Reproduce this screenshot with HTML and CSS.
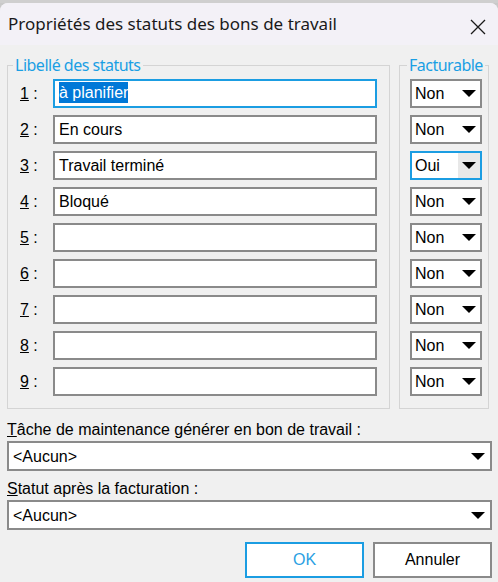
FILE: index.html
```html
<!DOCTYPE html>
<html lang="fr">
<head>
    <meta charset="UTF-8">
    <meta name="viewport" content="width=device-width, initial-scale=1.0">
    <title>Propriétés des statuts des bons de travail</title>
    <link rel="stylesheet" href="styles.css">
</head>
<body>
    <div class="behind"></div>

    <div class="dialog">
        <div class="titlebar">
            <span class="title">Propriétés des statuts des bons de travail</span>
            <svg class="close" width="16" height="16" viewBox="0 0 16 16">
                <path d="M1 1 L15 15 M15 1 L1 15" stroke="#1a1a1a" stroke-width="1.3" fill="none"/>
            </svg>
        </div>

        <div class="content">
            <div class="groups">
                <fieldset class="group group-labels">
                    <legend>Libellé des statuts</legend>
                    <div class="row"><span class="num"><u>1</u> :</span><div class="field focused"><span class="selected">à planifier</span></div></div>
                    <div class="row"><span class="num"><u>2</u> :</span><div class="field">En cours</div></div>
                    <div class="row"><span class="num"><u>3</u> :</span><div class="field">Travail terminé</div></div>
                    <div class="row"><span class="num"><u>4</u> :</span><div class="field">Bloqué</div></div>
                    <div class="row"><span class="num"><u>5</u> :</span><div class="field"></div></div>
                    <div class="row"><span class="num"><u>6</u> :</span><div class="field"></div></div>
                    <div class="row"><span class="num"><u>7</u> :</span><div class="field"></div></div>
                    <div class="row"><span class="num"><u>8</u> :</span><div class="field"></div></div>
                    <div class="row"><span class="num"><u>9</u> :</span><div class="field"></div></div>
                </fieldset>

                <fieldset class="group group-bill">
                    <legend>Facturable</legend>
                    <div class="combo small"><span class="value">Non</span><span class="drop"><span class="arrow"></span></span></div>
                    <div class="combo small"><span class="value">Non</span><span class="drop"><span class="arrow"></span></span></div>
                    <div class="combo small focused"><span class="value">Oui</span><span class="drop hot"><span class="arrow"></span></span></div>
                    <div class="combo small"><span class="value">Non</span><span class="drop"><span class="arrow"></span></span></div>
                    <div class="combo small"><span class="value">Non</span><span class="drop"><span class="arrow"></span></span></div>
                    <div class="combo small"><span class="value">Non</span><span class="drop"><span class="arrow"></span></span></div>
                    <div class="combo small"><span class="value">Non</span><span class="drop"><span class="arrow"></span></span></div>
                    <div class="combo small"><span class="value">Non</span><span class="drop"><span class="arrow"></span></span></div>
                    <div class="combo small"><span class="value">Non</span><span class="drop"><span class="arrow"></span></span></div>
                </fieldset>
            </div>

            <div class="caption first"><u>T</u>âche de maintenance générer en bon de travail :</div>
            <div class="combo wide"><span class="value">&lt;Aucun&gt;</span><span class="drop"><span class="arrow"></span></span></div>

            <div class="caption"><u>S</u>tatut après la facturation :</div>
            <div class="combo wide"><span class="value">&lt;Aucun&gt;</span><span class="drop"><span class="arrow"></span></span></div>

            <div class="buttons">
                <button class="btn ok">OK</button>
                <button class="btn">Annuler</button>
            </div>
        </div>
    </div>
</body>
</html>
```

FILE: styles.css
```css
html, body {
    margin: 0;
    padding: 0;
}

body {
    width: 498px;
    height: 582px;
    overflow: hidden;
    background-color: #c9c9c9;
    font-family: "Liberation Sans", Arial, sans-serif;
    font-size: 16px;
    color: #000;
}

.behind {
    height: 3px;
    background-color: #cfcfcf;
}

.dialog {
    background-color: #f0f0f0;
    border-top-left-radius: 8px;
    border-top-right-radius: 8px;
    overflow: hidden;
    height: 579px;
}

.titlebar {
    height: 42px;
    background-color: #f3f1f7;
    display: flex;
    align-items: center;
    justify-content: space-between;
    padding: 0 12px 0 8px;
}

.titlebar .title {
    font-family: "Noto Sans", sans-serif;
    font-size: 17px;
    color: #1a1a1a;
    margin-top: -1px;
}

.titlebar .close {
    margin-top: 6px;
}

.content {
    padding: 0 6px 0 7px;
}

.groups {
    display: flex;
    gap: 9px;
    margin-top: 10px;
}

.group {
    margin: 0;
    border: 1px solid #d4d4d4;
    padding: 4px 12px 12px 12px;
    display: flex;
    flex-direction: column;
    gap: 7px;
    min-width: 0;
}

.group legend {
    font-family: "Noto Sans", sans-serif;
    font-size: 16px;
    letter-spacing: -0.5px;
    line-height: 20px;
    color: #1a9fe4;
    padding: 0 2px;
    margin-left: -7px;
}

.group-labels {
    width: 357px;
}

.group-bill {
    width: 70px;
    padding-left: 10px;
    padding-right: 8px;
}

.group-bill legend {
    margin-left: -3px;
}

.row {
    display: flex;
    align-items: center;
    height: 29px;
}

.num {
    width: 33px;
    flex-shrink: 0;
}

.field {
    width: 324px;
    height: 29px;
    box-sizing: border-box;
    border: 2px solid #8a8a8a;
    background-color: #fff;
    padding: 0 4px;
    line-height: 25px;
    white-space: nowrap;
}

.field.focused {
    border-color: #1b9de2;
}

.selected {
    background-color: #0078d7;
    color: #fff;
    display: inline-block;
    line-height: 21px;
    vertical-align: top;
    margin-top: 1px;
}

.combo {
    display: flex;
    align-items: center;
    box-sizing: border-box;
    border: 2px solid #8a8a8a;
    background-color: #fff;
    height: 29px;
}

.combo.focused {
    border-color: #1b9de2;
}

.combo .value {
    flex: 1;
    padding-left: 3px;
    line-height: 25px;
}

.combo .drop {
    width: 22px;
    height: 25px;
    display: flex;
    align-items: center;
    justify-content: center;
}

.combo .drop.hot {
    background-color: #e8e8e8;
}

.arrow {
    width: 0;
    height: 0;
    border-left: 7px solid transparent;
    border-right: 7px solid transparent;
    border-top: 7px solid #000;
}

.combo.small {
    width: 72px;
}

.combo.wide {
    width: 485px;
    height: 30px;
}

.combo.wide .value {
    padding-left: 4px;
}

.combo.wide .drop {
    width: 20px;
    margin-right: 2px;
}

.caption {
    line-height: 23px;
    margin-top: 6px;
    white-space: nowrap;
}

.caption.first {
    margin-top: 10px;
    line-height: 22px;
}

.buttons {
    display: flex;
    justify-content: flex-end;
    gap: 9px;
    margin-top: 12px;
}

.btn {
    width: 119px;
    height: 36px;
    box-sizing: border-box;
    background-color: #fff;
    border: 2px solid #8a8a8a;
    font-family: "Liberation Sans", Arial, sans-serif;
    font-size: 16px;
    color: #000;
    padding: 0;
}

.btn.ok {
    border-color: #1b9de2;
    color: #2b9fe3;
}
```
